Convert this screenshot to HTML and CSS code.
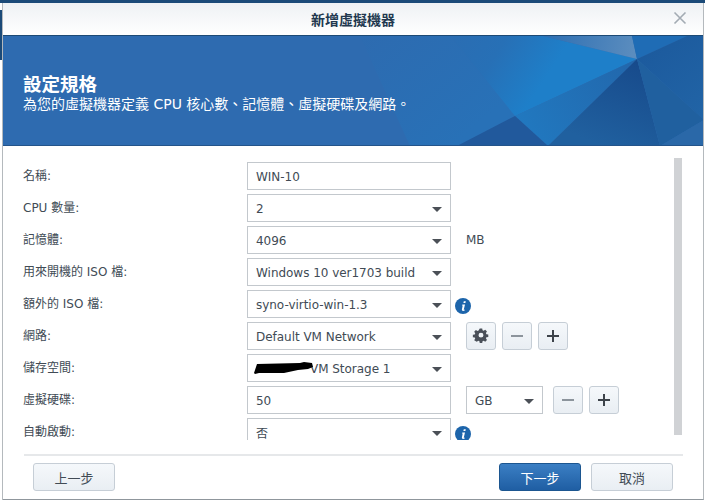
FILE: index.html
```html
<!DOCTYPE html>
<html lang="zh-Hant">
<head>
<meta charset="utf-8">
<title>新增虛擬機器</title>
<link rel="stylesheet" href="styles.css">
</head>
<body>
<div class="desk-top"></div>
<div class="desk-side"></div>
<main class="window">
  <header class="titlebar">
    <h1 class="title">新增虛擬機器</h1>
    <svg class="close" width="14" height="14" viewBox="0 0 14 14"><path d="M1.5 1.5 12.5 12.5M12.5 1.500 1.5 12.5" stroke="#a3abb3" stroke-width="1.6" fill="none"/></svg>
  </header>
  <section class="hero">
    <svg class="hero-art" width="701" height="110" viewBox="0 0 701 110">
      <defs>
        <linearGradient id="gA" gradientUnits="userSpaceOnUse" x1="400" y1="10" x2="515" y2="85"><stop offset="0" stop-color="#2d6bb0"/><stop offset=".6" stop-color="#2770b6"/><stop offset="1" stop-color="#1e7fc9"/></linearGradient>
        <linearGradient id="gB" gradientUnits="userSpaceOnUse" x1="545" y1="0" x2="630" y2="15"><stop offset="0" stop-color="#2f70b3"/><stop offset="1" stop-color="#5a8cbe"/></linearGradient>
        <linearGradient id="gC" gradientUnits="userSpaceOnUse" x1="640" y1="25" x2="520" y2="90"><stop offset="0" stop-color="#2266ab"/><stop offset="1" stop-color="#2178bf"/></linearGradient>
        <linearGradient id="gD" gradientUnits="userSpaceOnUse" x1="634" y1="23" x2="600" y2="110"><stop offset="0" stop-color="#174a8b"/><stop offset="1" stop-color="#20609f"/></linearGradient>
        <linearGradient id="gE" gradientUnits="userSpaceOnUse" x1="640" y1="10" x2="701" y2="80"><stop offset="0" stop-color="#1c5a9d"/><stop offset="1" stop-color="#2164a6"/></linearGradient>
        <linearGradient id="gF" gradientUnits="userSpaceOnUse" x1="357" y1="0" x2="450" y2="110"><stop offset="0" stop-color="#2d6bb0"/><stop offset="1" stop-color="#2871b7"/></linearGradient>
      </defs>
      <polygon points="357,0 447,0 512,80 454,110 407,110" fill="url(#gF)"/>
      <polygon points="447,0 540,0 634,23 512,80" fill="url(#gA)"/>
      <polygon points="540,0 629,0 634,23" fill="url(#gB)"/>
      <polygon points="629,0 684,0 634,23" fill="#1f6cb5"/>
      <polygon points="684,0 701,0 701,84 634,23" fill="url(#gE)"/>
      <polygon points="634,23 512,80 545,110" fill="url(#gC)"/>
      <polygon points="512,80 545,110 454,110" fill="#21599c"/>
      <polygon points="634,23 545,110 657,110" fill="url(#gD)"/>
      <polygon points="634,23 657,110 701,84" fill="#20609f"/>
      <polygon points="701,84 657,110 701,110" fill="#2a68a8"/>
    </svg>
    <h2 class="hero-title">設定規格</h2>
    <p class="hero-sub">為您的虛擬機器定義 CPU 核心數、記憶體、虛擬硬碟及網路。</p>
  </section>
  <section class="content">
    <form class="form">
      <div class="row"><label class="label">名稱:</label><div class="field">WIN-10</div></div>
      <div class="row"><label class="label">CPU 數量:</label><div class="field select">2<i class="caret"></i></div></div>
      <div class="row"><label class="label">記憶體:</label><div class="field select">4096<i class="caret"></i></div><span class="unit">MB</span></div>
      <div class="row"><label class="label">用來開機的 ISO 檔:</label><div class="field select">Windows 10 ver1703 build<i class="caret"></i></div></div>
      <div class="row"><label class="label">額外的 ISO 檔:</label><div class="field select">syno-virtio-win-1.3<i class="caret"></i></div>
        <svg class="info" width="16" height="16" viewBox="0 0 16 16"><circle cx="8" cy="8" r="8" fill="#1d65ab"/><path d="M8.800 3.200h2l-.4 1.900h-2zM7.400 6.400h2.600l-1.200 5.100c-.1.4.3.4 1 .1l-.1.9c-1.300.7-3.100.6-2.800-.9l.8-4.200h-.8z" fill="#fff"/></svg>
      </div>
      <div class="row"><label class="label">網路:</label><div class="field select">Default VM Network<i class="caret"></i></div>
        <div class="tools">
          <button type="button" class="tool"><svg width="18" height="18" viewBox="0 0 18 18"><path fill="#4a5059" fill-rule="evenodd" d="M7.500 1h3l.4 2.300 1.300.6 2-1.300 2.100 2.100-1.300 2 .6 1.300 2.300.4v3l-2.300.4-.6 1.300 1.300 2-2.100 2.100-2-1.300-1.300.6-.4 2.300h-3l-.4-2.300-1.300-.6-2 1.300L.7 15.400l1.300-2-.6-1.300L-.900 11.700v-3l2.300-.4.6-1.300-1.300-2L2.800 2.900l2 1.300 1.300-.6zM9 6.200a3 3 0 1 0 0 6 3 3 0 0 0 0-6z" transform="translate(1.600 .6) scale(.82)"/></svg></button>
          <button type="button" class="tool"><svg width="14" height="14" viewBox="0 0 14 14"><path d="M1 7h12" stroke="#8c949c" stroke-width="2"/></svg></button>
          <button type="button" class="tool"><svg width="14" height="14" viewBox="0 0 14 14"><path d="M1 7h12M7 1v12" stroke="#3d434a" stroke-width="2"/></svg></button>
        </div>
      </div>
      <div class="row"><label class="label">儲存空間:</label><div class="field select"><span class="storage">VM Storage 1</span><svg class="redact" width="60" height="12" viewBox="0 0 60 12"><path d="M0 11 3 2 46 1 50 0 58 1 59 5 54 7 44 8 30 11 5 11 1 12z" fill="#000"/></svg><i class="caret"></i></div></div>
      <div class="row"><label class="label">虛擬硬碟:</label><div class="field">50</div>
        <div class="tools disk"><div class="field select small">GB<i class="caret"></i></div>
          <button type="button" class="tool"><svg width="14" height="14" viewBox="0 0 14 14"><path d="M1 7h12" stroke="#8c949c" stroke-width="2"/></svg></button>
          <button type="button" class="tool"><svg width="14" height="14" viewBox="0 0 14 14"><path d="M1 7h12M7 1v12" stroke="#3d434a" stroke-width="2"/></svg></button>
        </div>
      </div>
      <div class="row"><label class="label">自動啟動:</label><div class="field select">否<i class="caret"></i></div>
        <svg class="info" width="16" height="16" viewBox="0 0 16 16"><circle cx="8" cy="8" r="8" fill="#1d65ab"/><path d="M8.800 3.200h2l-.4 1.900h-2zM7.400 6.400h2.600l-1.200 5.100c-.1.4.3.4 1 .1l-.1.9c-1.300.7-3.100.6-2.800-.9l.8-4.200h-.8z" fill="#fff"/></svg>
      </div>
    </form>
    <div class="scrollbar"></div>
  </section>
  <footer class="footer">
    <button type="button" class="btn">上一步</button>
    <div class="footer-right">
      <button type="button" class="btn primary">下一步</button>
      <button type="button" class="btn">取消</button>
    </div>
  </footer>
</main>
</body>
</html>
```

FILE: styles.css
```css
* { box-sizing: border-box; }
html, body { margin: 0; height: 100%; }
body {
  width: 705px;
  height: 500px;
  background: #fff;
  overflow: hidden;
  position: relative;
  font-family: "DejaVu Sans", "Noto Sans CJK TC", sans-serif;
  font-size: 12px;
  color: #414b55;
}
.desk-top { position: absolute; left: 0; top: 0; width: 100%; height: 3px; background: #1b4a78; }
.desk-side { position: absolute; left: 0; top: 10px; width: 2px; height: 50px; background: #1b4a78; }
.window {
  position: absolute;
  left: 3px;
  top: 3px;
  width: 701px;
  height: 497px;
  display: flex;
  flex-direction: column;
  background: #fff;
  border-bottom: 1px solid #8f969c;
  border-right: 1px solid #b4b9bd;
  box-shadow: -1px 0 0 #b4b9bd;
}
.titlebar {
  height: 32px;
  flex: none;
  display: flex;
  align-items: center;
  justify-content: center;
  position: relative;
  background: linear-gradient(#eef1f4, #fff);
}
.title {
  margin: 0 0 1px;
  font: bold 14px "Noto Sans CJK TC", sans-serif;
  color: #22384f;
}
.close { position: absolute; right: 16px; top: 8px; }
.hero {
  height: 111px;
  flex: none;
  position: relative;
  background: #2e6bb0;
  border-top: 1px solid #1d4a75;
  color: #fff;
  padding: 35px 0 0 20px;
  overflow: hidden;
}
.hero::after {
  content: "";
  position: absolute;
  left: 0;
  right: 0;
  bottom: 0;
  height: 1px;
  background: #24548a;
}
.hero-art { position: absolute; left: 0; top: 0; }
.hero-title {
  position: relative;
  margin: 0;
  font: bold 18.5px/24px "Noto Sans CJK TC", sans-serif;
}
.hero-sub {
  position: relative;
  margin: 0;
  font: 14px/18px "DejaVu Sans", "Noto Sans CJK TC", sans-serif;
}
.content {
  flex: 1;
  min-height: 0;
  display: flex;
  padding: 12px 21px 0 20px;
  position: relative;
}
.form {
  flex: 1;
  height: 282px;
  padding-top: 4px;
  overflow: hidden;
  display: flex;
  flex-direction: column;
  gap: 4px;
}
.row { display: flex; align-items: center; height: 28px; flex: none; }
.label { width: 224px; flex: none; color: #414b55; font-size: 12px; padding-bottom: 3px; }
.field {
  width: 204px;
  height: 28px;
  flex: none;
  display: flex;
  align-items: center;
  position: relative;
  padding: 1px 0 0 8px;
  background: #fff;
  border: 1px solid #c3c8cd;
  letter-spacing: -.03px;
}
.caret {
  position: absolute;
  right: 8px;
  top: 12px;
  width: 0;
  height: 0;
  border: 5px solid transparent;
  border-top: 5px solid #4b5057;
  border-bottom: 0;
}
.unit { margin-left: 15px; }
.info { margin-left: 4px; margin-top: 3px; }
.tools { display: flex; gap: 6px; margin-left: 15px; align-items: center; }
.tool {
  width: 30px;
  height: 28px;
  padding: 0;
  display: flex;
  align-items: center;
  justify-content: center;
  border: 1px solid #c6ced6;
  border-radius: 3px;
  background: linear-gradient(#f5f8fb, #e9eef3);
}
.small { width: 77px; margin-right: 4px; }
.storage { margin-left: 54px; }
.redact { position: absolute; left: 6px; top: 7px; }
.scrollbar { position: absolute; left: 671px; top: 12px; width: 8px; height: 277px; background: #d0d2d5; }
.footer {
  flex: none;
  margin: 0 20px 0 21px;
  height: 45px;
  border-top: 2px solid #e6e8ea;
  padding: 7px 10px 0 9px;
  display: flex;
  justify-content: space-between;
  align-items: flex-start;
}
.footer-right { display: flex; gap: 10px; }
.btn {
  width: 82px;
  height: 28px;
  padding: 0;
  font: 13px "Noto Sans CJK TC", sans-serif;
  color: #414b55;
  border: 1px solid #c6ced6;
  border-radius: 3px;
  background: linear-gradient(#f5f8fb, #e9eef3);
}
.btn.primary {
  color: #fff;
  border-color: #1c5690;
  background: linear-gradient(#3b7fc4, #1f5ea3);
}
```
